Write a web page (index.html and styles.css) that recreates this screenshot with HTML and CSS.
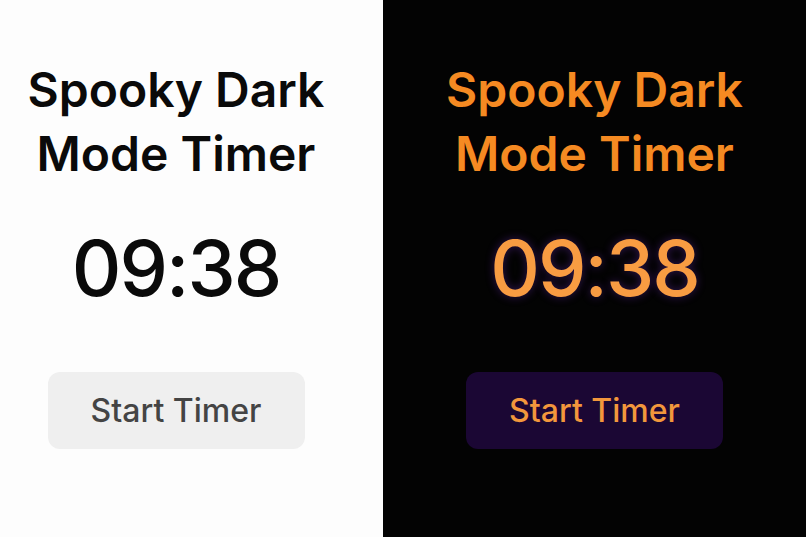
FILE: index.html
```html
<!DOCTYPE html>
<html lang="en">
  <head>
    <meta charset="UTF-8" />
    <meta name="viewport" content="width=device-width, initial-scale=1.0" />
    <title>Spooky Dark Mode Timer</title>
    <link rel="stylesheet" href="styles.css">
  </head>
  <body>
    <div class="compare">
      <div class="panel light">
        <h1>Spooky Dark<br />Mode Timer</h1>
        <div class="time">09:38</div>
        <button>Start Timer</button>
      </div>

      <div class="panel dark">
        <h1>Spooky Dark<br />Mode Timer</h1>
        <div class="time">09:38</div>
        <button>Start Timer</button>
      </div>
    </div>
  </body>
</html>
```

FILE: styles.css
```css
body {
  margin: 0;
  font-family: Inter, "Noto Sans", Arial, sans-serif;
}
.compare {
  display: grid;
  grid-template-columns: 383px 1fr;
  height: 537px;
}
.panel {
  display: flex;
  flex-direction: column;
  align-items: center;
  padding-top: 58px;
}
.light {
  background-color: #fdfdfd;
  color: #0a0a0a;
  padding-right: 31px;
}
.dark {
  background-color: #030303;
  color: #f58a22;
}
h1 {
  margin: 0;
  font-size: 48px;
  line-height: 64px;
  font-weight: 600;
  text-align: center;
}
.time {
  margin-top: 42px;
  font-size: 77px;
  line-height: 80px;
  font-weight: 500;
  letter-spacing: -2px;
}
.dark .time {
  color: #f89c42;
  text-shadow: 0 0 10px rgba(120, 50, 200, 0.4);
}
button {
  margin-top: 64px;
  width: 257px;
  height: 77px;
  border: none;
  border-radius: 12px;
  font-family: inherit;
  font-size: 32px;
  font-weight: 500;
  cursor: pointer;
}
.light button {
  background-color: #efefef;
  color: #444;
}
.dark button {
  background-color: #1b0734;
  color: #f2973c;
}
```
